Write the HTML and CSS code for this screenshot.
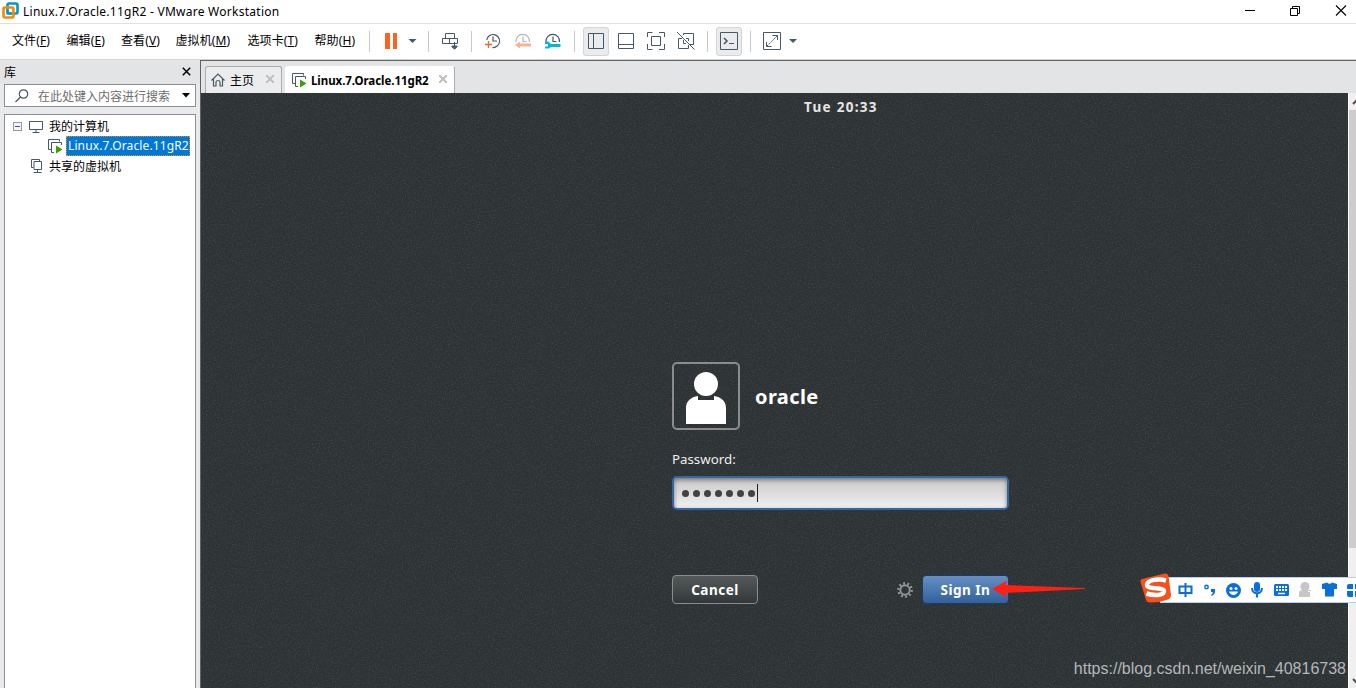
FILE: index.html
```html
<!DOCTYPE html>
<html lang="zh-CN">
<head>
    <meta charset="UTF-8">
    <title>Linux.7.Oracle.11gR2 - VMware Workstation</title>
    <link rel="stylesheet" href="styles.css">
</head>
<body>

<!-- Shared icons -->
<svg class="defs" width="0" height="0">
    <symbol id="vm-running" viewBox="0 0 15 15">
        <path d="M3.500 10.500H.5V.5H11.500V2.500M6 13.500H3.500V3.500H13.500V6" fill="none" stroke="#465967"/>
        <path d="M8 6.500L14.500 10.500L8 14.500Z" fill="#3f9c0c"/>
    </symbol>
    <symbol id="clock" viewBox="0 0 16 16">
        <path d="M1 9A6.800 6.800 0 1 1 14.500 9M8 3.500V8.500H11.500" fill="none" stroke="currentColor" stroke-width="1.200"/>
    </symbol>
</svg>

<header class="titlebar">
    <svg class="logo" width="17" height="17" viewBox="0 0 17 17" fill="none" stroke-width="2.600">
        <rect x="5.500" y="1.500" width="10" height="10" rx="1.500" stroke="#0095d3"/>
        <rect x="1.500" y="5.500" width="10" height="10" rx="1.500" stroke="#f38b00"/>
        <path d="M5.500 8V11.500H9" stroke="#0095d3" stroke-width="2"/>
    </svg>
    <h1>Linux.7.Oracle.11gR2 - VMware Workstation</h1>
    <svg class="window-buttons" width="104" height="12" viewBox="0 0 104 12" fill="none" stroke="#000">
        <path d="M0 5.500H10M45.500 3.500H52.500V10.500H45.500ZM47.500 3V1.500H54.500V8.500H53"/>
        <path d="M91 .5L101 10.500M101 .5L91 10.500" stroke-width="1.100"/>
    </svg>
</header>

<nav class="menubar">
    <div class="menus">
        <span>文件(<u>F</u>)</span>
        <span>编辑(<u>E</u>)</span>
        <span>查看(<u>V</u>)</span>
        <span class="wide">虚拟机(<u>M</u>)</span>
        <span class="wide">选项卡(<u>T</u>)</span>
        <span>帮助(<u>H</u>)</span>
    </div>
    <div class="tools">
        <i class="sep"></i>
        <svg class="pause" width="32" height="16" viewBox="0 0 32 16">
            <path d="M0 0H5V16H0ZM8 0H12V16H8Z" fill="#fb6420"/>
            <path d="M23.500 6H31.500L27.500 10Z" fill="#465967"/>
        </svg>
        <i class="sep"></i>
        <svg class="send" width="17" height="17" viewBox="0 0 17 17" fill="none" stroke="#465967">
            <path d="M3.500 5.500V.5H12.500V5.500M.5 5.500H15.500V10.500H.5ZM7.500 5.500V10.500M12.500 9V16M9.500 13.500L12.500 16L15.500 13.500"/>
            <path d="M10 13H15L12.500 16Z" fill="#465967"/>
        </svg>
        <i class="sep"></i>
        <svg class="snap" width="16" height="16" viewBox="0 0 16 16" fill="none">
            <path d="M1.700 7A6.500 6.500 0 1 1 7.500 14.500M8 3.500V8H12" stroke="#465967" stroke-width="1.200"/>
            <path d="M0 11.500H7M3.500 8V15" stroke="#fb6420" stroke-width="1.300"/>
        </svg>
        <svg class="snap dim" width="16" height="16" viewBox="0 0 16 16">
            <use href="#clock"/>
            <path d="M0 12L5 8.500V10.500H16V13.500H5V15.500Z" fill="#ffb08c"/>
        </svg>
        <svg class="snap" width="16" height="16" viewBox="0 0 16 16">
            <use href="#clock"/>
            <path d="M0 8.500H3.500L6 11H15.500V14H6L4 15.500H0V13.500H3V11H0Z" fill="#00b7dc"/>
        </svg>
        <i class="sep"></i>
        <span class="tool pressed">
            <svg width="16" height="16" viewBox="0 0 16 16"><path d="M.5.5H15.500V15.500H.5ZM5.500 0V16"/></svg>
        </span>
        <span class="tool">
            <svg width="16" height="16" viewBox="0 0 16 16"><path d="M.5.5H15.500V15.500H.5ZM0 11.500H16"/></svg>
        </span>
        <span class="tool">
            <svg width="18" height="18" viewBox="0 0 18 18"><path d="M.5 5V.5H5.500M12 .5H17.500V5M17.500 12V17.500H12M5.500 17.500H.5V12M4.500 4.500H13.500V13.500H4.500Z"/></svg>
        </span>
        <span class="tool">
            <svg width="18" height="18" viewBox="0 0 18 18"><path d="M6.500 3V1.500H16.500V12.500H13M5 6.500H1.500V16.500H11.500V13M9 6.500H11.500V9M6.500 8V11.500H9M0 0L17.500 17.500"/></svg>
        </span>
        <i class="sep"></i>
        <span class="tool pressed">
            <svg width="18" height="18" viewBox="0 0 18 18"><path d="M.5.5H17.500V17.500H.5ZM9 11.500H14"/><path d="M4 6L7 9L4 12" stroke-width="1.600"/></svg>
        </span>
        <i class="sep"></i>
        <svg class="fullscreen" width="35" height="18" viewBox="0 0 35 18" fill="none" stroke="#465967">
            <path d="M.5.5H17.500V17.500H.5ZM9.500 3.500H14.500V8M3.500 10V14.500H8.500"/>
            <path d="M4 14L14 4" stroke-dasharray="2 1"/>
            <path d="M26 7H34L30 11Z" fill="#465967" stroke="none"/>
        </svg>
    </div>
</nav>

<main class="workspace">
    <aside class="library">
        <div class="library-head">
            <span>库</span>
            <svg width="9" height="9" viewBox="0 0 9 9"><path d="M.8.8L8.200 8.200M8.200.8L.8 8.200" stroke="#000" stroke-width="1.500"/></svg>
        </div>
        <div class="search">
            <svg width="14" height="14" viewBox="0 0 14 14" fill="none" stroke="#465967" stroke-width="1.200"><circle cx="8.500" cy="5" r="4.200"/><path d="M5.500 8L.5 13"/></svg>
            <span>在此处键入内容进行搜索</span>
            <svg width="8" height="5" viewBox="0 0 8 5"><path d="M0 0H8L4 4.500Z"/></svg>
        </div>
        <ul class="tree">
            <li>
                <svg width="9" height="9" viewBox="0 0 9 9"><rect x=".5" y=".5" width="8" height="8" fill="#f4f4f4" stroke="#999"/><path d="M2 4.500H7" stroke="#3a50a0"/></svg>
                <svg class="pc" width="14" height="12" viewBox="0 0 14 12" fill="none" stroke="#465967"><path d="M.5.500H13.500V8.500H.5ZM7 8.500V11M3.500 11.500H10.500"/></svg>
                <span>我的计算机</span>
            </li>
            <li class="child">
                <svg width="15" height="15"><use href="#vm-running"/></svg>
                <span class="selected">Linux.7.Oracle.11gR2</span>
            </li>
            <li class="shared">
                <svg width="12" height="14" viewBox="0 0 12 14" fill="none" stroke="#465967"><path d="M2.500 8.500H.5V.5H8.500V2.500M3 2.500H10.500V10.500H3ZM6.500 10.500V13M2.500 13.500H10.500"/></svg>
                <span>共享的虚拟机</span>
            </li>
        </ul>
    </aside>

    <section class="console">
        <div class="tabs">
            <div class="tab home">
                <svg width="14" height="14" viewBox="0 0 14 14" fill="none" stroke="#465967" stroke-width="1.200"><path d="M.5 7.500L7 1L13.500 7.500M2.500 6V13H5V9.500A2 2 0 0 1 9 9.500V13H11.500V6"/></svg>
                <span>主页</span>
                <b class="close"></b>
            </div>
            <div class="tab active">
                <svg width="15" height="15"><use href="#vm-running"/></svg>
                <span>Linux.7.Oracle.11gR2</span>
                <b class="close"></b>
            </div>
        </div>
        <div class="view">
            <div class="guest">
                <svg class="grain" width="100%" height="100%">
                    <filter id="noise" color-interpolation-filters="sRGB">
                        <feTurbulence type="fractalNoise" baseFrequency=".7" numOctaves="2"/>
                        <feColorMatrix values="0 0 0 0 1  0 0 0 0 1  0 0 0 0 1  .2 0 0 0 -.09"/>
                    </filter>
                    <rect width="100%" height="100%" filter="url(#noise)"/>
                </svg>
                <div class="clock">Tue 20:33</div>
                <form class="login">
                    <div class="user">
                        <div class="avatar">
                            <svg width="40" height="52" viewBox="0 0 40 52" fill="#fff"><circle cx="20" cy="12" r="12"/><path d="M12 24V28H28V24C35 25 40 29 40 36V52H0V36C0 29 5 25 12 24Z"/></svg>
                        </div>
                        <span>oracle</span>
                    </div>
                    <label>Password:</label>
                    <div class="password">
                        <i></i><i></i><i></i><i></i><i></i><i></i><i></i>
                        <b class="caret"></b>
                    </div>
                    <div class="actions">
                        <button type="button" class="cancel">Cancel</button>
                        <svg class="gear" width="16" height="16" viewBox="0 0 16 16" fill="none" stroke="#929494">
                            <circle cx="8" cy="8" r="4.700" stroke-width="1.900"/>
                            <circle cx="8" cy="8" r="6.700" stroke-width="2.400" stroke-dasharray="1.900 2.310"/>
                        </svg>
                        <button type="button" class="signin">Sign In</button>
                    </div>
                </form>
            </div>
            <div class="scrollbar">
                <svg width="8" height="17" viewBox="0 0 8 17"><path d="M4 11L8 7" stroke="#505050" stroke-width="2"/></svg>
                <div class="thumb"></div>
                <svg width="8" height="17" viewBox="0 0 8 17"><path d="M4 8L8 12" stroke="#505050" stroke-width="2"/></svg>
            </div>
        </div>
    </section>
</main>

<svg class="arrow" width="94" height="20" viewBox="0 0 94 20"><path d="M0 10L15 1.500L13.500 6L93 9V10L13.500 14L15 18.500Z" fill="#ff2014"/></svg>

<!-- Input method bar -->
<div class="ime">
    <svg width="216" height="32" viewBox="0 0 216 32" fill="#0a6fdb">
        <path d="M2 6L25 .5Q28 0 28.500 3L31 22Q31 25 28 26.500Q19 30 10 29.500Q7 29.500 6 27L.5 9Q0 7 2 6Z" fill="#f4511e"/>
        <path d="M26 7.500C17 5 7 7.500 7 12C7 17 24.500 13.500 24 18.500C23.500 22.500 14 23 6.500 20.500" fill="none" stroke="#fff" stroke-width="4.500"/>
        <path d="M39.500 13.500H51.500V20H39.500ZM45.500 10V24" fill="none" stroke="#0a6fdb" stroke-width="2"/>
        <circle cx="66.500" cy="14" r="1.700" fill="none" stroke="#0a6fdb" stroke-width="1.500"/>
        <path d="M71 16H75C75.500 20 74 22 71.500 23L71 22C72.500 21 73 20 72.500 19H71Z"/>
        <circle cx="93.500" cy="17.500" r="7.500"/>
        <g fill="#fff"><circle cx="91" cy="15.500" r="1.500"/><circle cx="96" cy="15.500" r="1.500"/><path d="M89 18.500H98C97 23 90 23 89 18.500Z"/></g>
        <rect x="114" y="9" width="6" height="10" rx="3"/>
        <path d="M112 15C112 22 122 22 122 15M117 20V24.500" fill="none" stroke="#0a6fdb" stroke-width="2"/>
        <rect x="134" y="11" width="15" height="12" rx="1.500"/>
        <path d="M136 14H147M136 17H147" stroke="#fff" stroke-width="2" stroke-dasharray="2 1"/>
        <path d="M138 20.500H145" stroke="#fff" stroke-width="1.500"/>
        <g fill="#c6c6c6"><circle cx="165" cy="13.500" r="4.500"/><path d="M159 24V20Q159 17 163 17H171V24Z"/></g>
        <path d="M168 18.500H170.500V24" fill="none" stroke="#fff"/>
        <path d="M182 11L187 9.500Q189.500 12 192 9.500L197 11V16H194V23.500H185V16H182Z"/>
        <path d="M209 11H213V16H207V13Q207 11 209 11ZM207 18H213V24H209Q207 24 207 22ZM215 11H221V16H215ZM215 18H221V24H215Z"/>
    </svg>
</div>
<div class="watermark">https://blog.csdn.net/weixin_40816738</div>

</body>
</html>
```
FILE: styles.css
```css
* {
    box-sizing: border-box;
}
body {
    margin: 0;
    height: 688px;
    overflow: hidden;
    display: flex;
    flex-direction: column;
    background: #fff;
    color: #000;
    font: 12px "Noto Sans", "Noto Sans CJK SC", sans-serif;
}
svg {
    display: block;
    flex: none;
}
.defs {
    position: absolute;
}
.titlebar {
    height: 24px;
    flex: none;
    display: flex;
    align-items: center;
    padding: 0 10px 2px 2px;
    border-bottom: 1px solid #e0e0e0;
}
.titlebar h1 {
    margin: 0 auto 0 4px;
    padding-top: 2px;
    font-size: 12px;
    font-weight: normal;
    letter-spacing: 0.26px;
}
.window-buttons {
    margin-right: -3px;
}
.menubar {
    height: 36px;
    flex: none;
    display: flex;
    border-bottom: 1px solid #d4d4d4;
}
.menus {
    width: 369px;
    display: flex;
    padding: 8px 0 0 12px;
    line-height: 18px;
    white-space: nowrap;
    letter-spacing: 0.1px;
}
.menus span {
    width: 54.5px;
}
.menus .wide {
    width: 72px;
}
.menus span:nth-child(5) {
    width: 67px;
}
.tools {
    display: flex;
    align-items: center;
    padding-bottom: 1px;
}
.sep {
    width: 1px;
    height: 21px;
    background: #c9c9c9;
}
.pause {
    margin: 0 11px 0 15px;
}
.send {
    margin: 0 12px 0 13px;
}
.snap {
    margin-left: 14px;
    color: #465967;
}
.sep + .snap {
    margin-left: 13px;
}
.snap + .sep {
    margin: 0 8px 0 13px;
}
.dim {
    color: #b1b8bd;
}
.tool {
    width: 26px;
    height: 29px;
    margin-right: 4px;
    display: flex;
    align-items: center;
    justify-content: center;
    border: 1px solid transparent;
    border-radius: 3px;
}
.tool svg {
    fill: none;
    stroke: #465967;
}
.tool + .sep {
    margin: 0 8px 0 4px;
}
.pressed {
    background: #e9ebec;
    border-color: #d2d4d5;
}
.fullscreen {
    margin-left: 4px;
}
.workspace {
    flex: 1;
    min-height: 0;
    display: flex;
}
.library {
    width: 200px;
    display: flex;
    flex-direction: column;
    padding: 0 4px;
    background: #e9eaec;
}
.library-head {
    height: 24px;
    display: flex;
    align-items: center;
    justify-content: space-between;
    margin: 0 -4px;
    padding: 0 9px 1px 4px;
    background: #e3e4e6;
}
.search {
    height: 23px;
    width: 192px;
    display: flex;
    align-items: center;
    padding: 0 5px 0 10px;
    background: #fff;
    border: 1px solid #8b8e96;
    color: #6d6d6d;
}
.search span {
    margin: 0 auto 0 9px;
}
.tree {
    flex: 1;
    width: 192px;
    margin: 7px 0 0;
    padding: 1px 0 0 8px;
    list-style: none;
    background: #fff;
    border: 1px solid #8b8e96;
    border-bottom: 0;
}
.tree li {
    height: 20px;
    display: flex;
    align-items: center;
}
.tree span {
    margin-top: -1px;
}
.tree .pc {
    margin: 1px 6px 0 7px;
}
.tree .child {
    padding-left: 35px;
}
.tree .selected {
    height: 20px;
    width: 124px;
    margin: 0 0 0 3px;
    padding-left: 1px;
    line-height: 17px;
    letter-spacing: 0.12px;
    white-space: nowrap;
    background: #0078d7;
    color: #fff;
    border: 1px dotted #e68a2e;
}
.shared {
    padding-left: 18px;
}
.shared span {
    margin-left: 6px;
}
.console {
    flex: 1;
    min-width: 0;
    display: flex;
    flex-direction: column;
    border-left: 1px solid #5f6264;
    border-top: 1px solid #5f6264;
}
.tabs {
    height: 32px;
    flex: none;
    display: flex;
    align-items: flex-end;
    gap: 3px;
    padding-left: 4px;
    background: #e3e4e6;
}
.tab {
    height: 27px;
    display: flex;
    align-items: center;
    border: 1px solid #a9abad;
    border-bottom: 0;
    border-radius: 3px 3px 0 0;
}
.home {
    width: 77px;
    padding-left: 5px;
    background: #ebeced;
}
.home span {
    margin: 0 12px 0 5px;
}
.active {
    width: 170px;
    padding-left: 6px;
    background: #fff;
    border-color: #fff #a9abad #fff #fff;
    font-weight: bold;
    font-size: 11.500px;
}
.active span {
    width: 119px;
    margin: 0 9px 0 4px;
    white-space: nowrap;
    letter-spacing: -0.06px;
}
.close {
    width: 8px;
    height: 8px;
    margin-top: -2px;
    background:
        linear-gradient(45deg, transparent 40%, #c2c2c2 40%, #c2c2c2 60%, transparent 60%),
        linear-gradient(-45deg, transparent 40%, #c2c2c2 40%, #c2c2c2 60%, transparent 60%);
}
.view {
    flex: 1;
    min-height: 0;
    display: flex;
}
.guest {
    flex: 1;
    min-width: 0;
    position: relative;
    background: #2d3335;
    color: #fff;
    font-family: "Noto Sans", sans-serif;
}
.grain {
    position: absolute;
    inset: 0;
}
.clock {
    position: relative;
    padding: 4px 0 0 603px;
    font-size: 13.500px;
    line-height: 20px;
    font-weight: bold;
    letter-spacing: 1.3px;
    white-space: nowrap;
    color: #e6e6e6;
}
.login {
    position: relative;
    width: 337px;
    margin: 245px 0 0 471px;
}
.user {
    display: flex;
    align-items: center;
    gap: 15px;
    font-size: 20px;
    font-weight: bold;
    letter-spacing: 0.4px;
}
.avatar {
    width: 68px;
    height: 68px;
    padding-top: 3px;
    display: flex;
    align-items: center;
    justify-content: center;
    border: 2px solid #8b8d8d;
    border-radius: 5px;
}
.login label {
    display: block;
    margin-top: 19px;
    font-size: 13.300px;
    line-height: 20px;
    color: #eee;
}
.password {
    height: 34px;
    margin-top: 7px;
    display: flex;
    align-items: center;
    gap: 4px;
    padding-left: 8px;
    border: 2px solid #3465a4;
    border-radius: 5px;
    background: linear-gradient(#c8c8c8, #f0f0f0);
    box-shadow: inset 0 2px 4px #777;
}
.password i {
    width: 7px;
    height: 7px;
    border-radius: 50%;
    background: #424242;
}
.caret {
    width: 1px;
    height: 18px;
    margin-left: -2px;
    background: #222;
}
.actions {
    display: flex;
    align-items: center;
    margin-top: 65px;
}
.actions button {
    height: 29px;
    width: 86px;
    padding: 0;
    color: #fff;
    font: bold 13.500px "Noto Sans", sans-serif;
    letter-spacing: 0.5px;
    border-radius: 4px;
}
.actions .cancel {
    background: linear-gradient(#55595a, #323839);
    border: 1px solid #8a8c8d;
}
.gear {
    margin: 0 9px 0 auto;
}
.actions .signin {
    width: 87px;
    background: linear-gradient(#6490c4, #34609b);
    border: 1px solid #1c3a66;
}
.scrollbar {
    width: 8px;
    flex: none;
    display: flex;
    flex-direction: column;
    background: #f0f0f0;
    border-left: 1px solid #fff;
}
.thumb {
    height: 438px;
    margin-bottom: auto;
    background: #cdcdcd;
}
.arrow {
    position: absolute;
    left: 992px;
    top: 579px;
}
.ime {
    position: absolute;
    left: 1140px;
    top: 573px;
    width: 216px;
    height: 30px;
    overflow: hidden;
    background: linear-gradient(#b8d0ee, #b8d0ee 1px, #fff 1px, #fff 25px, #b8d0ee 25px) 20px 4px / 196px 26px no-repeat;
}
.watermark {
    position: absolute;
    right: 10px;
    top: 659px;
    font: 16px/20px "Liberation Sans", sans-serif;
    color: #b5b7b8;
}
```
